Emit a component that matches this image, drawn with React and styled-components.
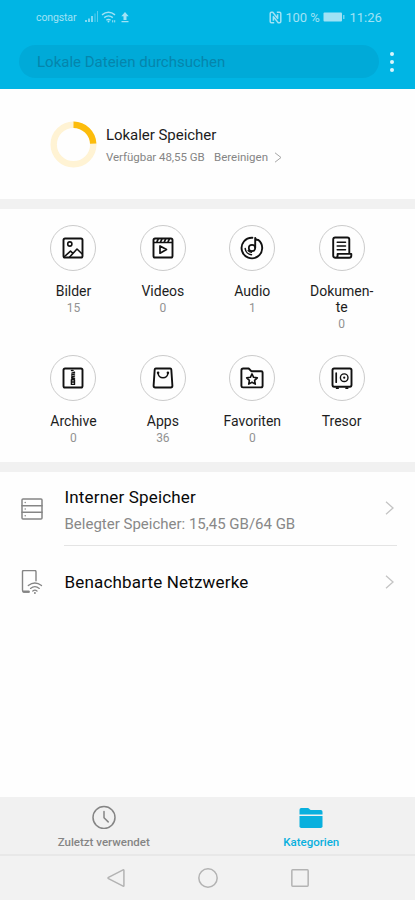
import React from "react";
import styled, { createGlobalStyle } from "styled-components";

const GlobalStyle = createGlobalStyle`
  * { box-sizing: border-box; }
  body { margin: 0; background: #fff; font-family: Roboto, sans-serif; }
  svg { display: block; flex: none; }
`;

const Screen = styled.div`
  width: 415px;
  height: 900px;
  display: flex;
  flex-direction: column;
  background: #fefefe;
  overflow: hidden;
`;

const Header = styled.header`
  flex: none;
  height: 89px;
  background: #00b5e4;
`;

const StatusBar = styled.div`
  height: 45px;
  padding: 1px 33px 12px 36px;
  display: flex;
  align-items: center;
  color: #a0e2f5;
`;

const Carrier = styled.span`
  width: 41px;
  margin-right: 8px;
  font-size: 10.5px;
  letter-spacing: -0.12px;
  white-space: nowrap;
`;

const StatusEnd = styled.div`
  margin-left: auto;
  display: flex;
  align-items: center;
  gap: 3px;
  font-size: 13px;
  white-space: nowrap;
`;

const Percent = styled.span`
  width: 35px;
  letter-spacing: -0.1px;
`;

const Time = styled.span`
  width: 32.6px;
  margin-left: 1px;
`;

const SearchRow = styled.div`
  display: flex;
  align-items: center;
  padding-left: 19px;
`;

const SearchField = styled.div`
  width: 360px;
  height: 33px;
  padding-left: 18px;
  border-radius: 17px;
  background: #00aad8;
  color: #0585ac;
  font-size: 15px;
  line-height: 34px;
`;

const MenuDots = styled.div`
  display: flex;
  flex-direction: column;
  gap: 4px;
  margin-left: 11px;
`;

const Dot = styled.i`
  width: 4px;
  height: 4px;
  border-radius: 50%;
  background: #d9f5fc;
`;

const Summary = styled.section`
  flex: none;
  height: 110px;
  display: flex;
  align-items: center;
  gap: 9px;
  padding-left: 50px;
`;

const SummaryTitle = styled.div`
  margin-top: 4px;
  font-size: 15px;
  line-height: 20px;
  letter-spacing: -0.04px;
  color: #1c1c1c;
`;

const SummaryMeta = styled.div`
  display: flex;
  align-items: center;
  margin-top: 3px;
  font-size: 11.5px;
  line-height: 19px;
  color: #858585;
`;

const FreeSpace = styled.span`
  width: 108px;
  letter-spacing: -0.04px;
`;

const CleanUp = styled.span`
  width: 60px;
`;

const Band = styled.div`
  flex: none;
  height: 10px;
  background: #f1f1f1;
`;

const Categories = styled.section`
  flex: none;
  height: 253px;
  display: grid;
  grid-template-columns: repeat(4, 89.4px);
  grid-template-rows: 130px 1fr;
  padding: 16px 0 0 28.8px;
`;

const Category = styled.div`
  display: flex;
  flex-direction: column;
  align-items: center;
`;

const IconRing = styled.div`
  flex: none;
  width: 46px;
  height: 46px;
  display: grid;
  place-items: center;
  border: 1px solid #cbcbcb;
  border-radius: 50%;
  color: #111;
`;

const CategoryName = styled.div`
  margin-top: 12px;
  font-size: 14px;
  line-height: 16px;
  text-align: center;
  white-space: pre-line;
  color: #1d1d1d;
`;

const Count = styled.div`
  font-size: 12px;
  line-height: 18px;
  color: #929292;
`;

const Entry = styled.div`
  flex: none;
  height: 73.5px;
  display: flex;
  padding-left: 20px;
`;

const EntryIcon = styled.div`
  width: 44px;
  display: flex;
  align-items: center;
  color: #858585;
`;

const EntryBody = styled.div`
  width: 333px;
  display: flex;
  align-items: center;
  justify-content: space-between;
  padding: 0 3px 0 0.5px;
  border-bottom: ${(p) => (p.$divided ? "1px solid #e4e4e4" : "0")};
`;

const EntryTitle = styled.div`
  font-size: 17px;
  line-height: 24px;
  letter-spacing: 0.17px;
  color: #080808;
`;

const EntryText = styled.div`
  padding-top: ${(p) => (p.$divided ? "4px" : "0")};
`;

const EntryNote = styled.div`
  margin-top: 4px;
  font-size: 15px;
  line-height: 22px;
  color: #888;
`;

const TabBar = styled.nav`
  flex: none;
  height: 59px;
  margin-top: auto;
  display: grid;
  grid-template-columns: 1fr 1fr;
  background: #f1f1f1;
  border-bottom: 2px solid #e8e8e8;
`;

const Tab = styled.div`
  display: flex;
  flex-direction: column;
  align-items: center;
  padding-top: 8px;
  gap: 5px;
  font-size: 11.5px;
  font-weight: 500;
  line-height: 16px;
  color: ${(p) => (p.$active ? "#09b0de" : "#858585")};
`;

const SystemNav = styled.div`
  flex: none;
  height: 44px;
  display: flex;
  align-items: center;
  justify-content: center;
  gap: 72px;
  padding-bottom: 1px;
  background: #f2f2f2;
  color: #b3b3b3;
`;

const Glyph = ({ size = 24, width = 1.9, children }) => (
  <svg width={size} height={size} viewBox="0 0 24 24" fill="none" stroke="currentColor"
    strokeWidth={width} strokeLinecap="round" strokeLinejoin="round">
    {children}
  </svg>
);

const Chevron = ({ w = 9, h = 14, color = "#c4c4c4", stroke = 1.3 }) => (
  <svg width={w} height={h} viewBox={`0 0 ${w} ${h}`} fill="none" stroke={color} strokeWidth={stroke}>
    <path d={`M1 .8 L${w - 1} ${h / 2} L1 ${h - 0.8}`} />
  </svg>
);

const icons = {
  image: (
    <>
      <rect x="2.5" y="2.5" width="19" height="19" rx="1.6" />
      <circle cx="8.8" cy="8" r="2.1" strokeWidth="1.6" />
      <path d="M3.5 20.5 9.5 15.2l2.5 2.1M8.7 21 16 13l5.2 5" strokeWidth="1.6" />
    </>
  ),
  video: (
    <>
      <rect x="2.5" y="2.5" width="19" height="19" rx="1.6" />
      <path d="M3 6.5h18" strokeWidth="1.5" />
      <path d="m6 5.6 1.1-2.3m2.6 2.3 1.1-2.3m2.6 2.3 1.1-2.3m2.6 2.3 1.1-2.3" strokeWidth="1.7" />
      <path d="M9 10v7.2l6.5-3.6Z" strokeWidth="1.7" />
    </>
  ),
  audio: (
    <>
      <path d="M12.4 1.7A10.3 10.3 0 1 0 18.4 4Q15.4 3.9 15.2 1.9v9.8" />
      <circle cx="12" cy="12" r="3.2" strokeWidth="1.7" />
      <path d="M5.2 12.6a6.9 6.9 0 0 0 6.3 6.1M8.2 14.6c.7 1.1 1.8 1.5 3.2 1.6" strokeWidth="1.5" />
    </>
  ),
  document: (
    <>
      <path d="M3.2 19.6V3.5q0-2 2-2h12.1q2 0 2 2v14.4M3.2 19.6q0 2.2 2.2 2.2h13.8q2.1 0 2.1-2v-1.9H7.6v1.6q0 2.2-2 2.3" />
      <path d="M7.2 6.2h8.3M7.2 10h8.3M7.2 13.8h8.3" strokeWidth="1.5" />
    </>
  ),
  archive: (
    <>
      <rect x="2.5" y="2.5" width="19" height="19" rx="1.6" />
      <path d="M12 4.5h-1.5m3 1.8-2.6.8m2.6 1-2.8.9m2.8 1.1-2.8.9m2.8 1.3h-2.7" strokeWidth="1.5" />
      <path d="M10.4 13.7h3.1v4.7h-3.1Zm0 2.3h3.1" strokeWidth="1.4" />
    </>
  ),
  apps: (
    <>
      <path d="M4.8 2.5h14.4q1 0 1.1 1l1.1 16.3q0 1.7-1.6 1.7H4.2q-1.6 0-1.6-1.7L3.7 3.5q.1-1 1.1-1Z" />
      <path d="M7.1 6.9a4.9 4.9 0 0 0 9.8 0" strokeWidth="1.6" />
      <path d="M7.1 6.7v.1m9.8-.1v.1" strokeWidth="2.6" />
    </>
  ),
  favorite: (
    <>
      <path d="M1.4 20V4.4Q1.4 2.5 3.2 2.5h5.5l2.6 2.7h9.9q1.4 0 1.4 1.4v13.2q0 1.6-1.6 1.6H3q-1.6 0-1.6-1.4Z" />
      <path d="m12 7.9 1.6 3.4 3.7.5-2.7 2.6.7 3.7-3.3-1.8-3.3 1.8.7-3.7-2.7-2.6 3.7-.5Z" strokeWidth="1.6" />
    </>
  ),
  safe: (
    <>
      <rect x="2.5" y="2.5" width="19" height="18.2" rx="1.6" />
      <path d="M6.2 7.2v9M6.6 22.2h1.5m8 0h1.5" strokeWidth="1.7" />
      <circle cx="14.2" cy="11.7" r="3.8" strokeWidth="1.4" />
      <path d="M14.2 11.7h.01" strokeWidth="2.2" />
    </>
  ),
};

const categories = [
  { icon: "image", name: "Bilder", count: "15" },
  { icon: "video", name: "Videos", count: "0" },
  { icon: "audio", name: "Audio", count: "1" },
  { icon: "document", name: "Dokumen-\nte", count: "0" },
  { icon: "archive", name: "Archive", count: "0" },
  { icon: "apps", name: "Apps", count: "36" },
  { icon: "favorite", name: "Favoriten", count: "0" },
  { icon: "safe", name: "Tresor" },
];

const SignalIcons = () => (
  <svg width="46" height="16" viewBox="0 0 46 16" fill="none" stroke="currentColor">
    <path d="M1 13v-2M4 13V9.5M7 13V7" strokeWidth="1.6" />
    <path d="M10 13V4.5M12.5 13V2" strokeWidth="1" opacity=".55" />
    <path d="M17 5.9q6.5-5.3 13 0M19.2 8.6q4.3-3.5 8.6 0M21.4 11.2q2.1-1.7 4.2 0" strokeWidth="1.4" />
    <circle cx="23.5" cy="12.6" r="1" fill="currentColor" stroke="none" />
    <path d="M27.7 11.2v2.2m2-2.2v2.2" strokeWidth="1" />
    <path d="m40 3 3.7 4.2h-2.2V11h-3V7.2h-2.2ZM36.5 12h7v1.3h-7Z" fill="currentColor" stroke="none" />
  </svg>
);

const NfcIcon = () => (
  <svg width="13" height="13" viewBox="0 0 13 13" fill="none" stroke="currentColor" strokeLinejoin="round">
    <path d="M5.2 11.8H2.4Q1.2 11.8 1.2 10.6V2.4Q1.2 1.2 2.4 1.2H3.8L8.6 7.4V3.2" strokeWidth="1.5" />
    <path d="M7.8 1.2h2.8q1.2 0 1.2 1.2v8.2q0 1.2-1.2 1.2H9.2L4.4 5.6v4.2" strokeWidth="1.5" />
  </svg>
);

const BatteryIcon = () => (
  <svg width="22" height="10" viewBox="0 0 22 10">
    <rect x=".5" y=".5" width="18.5" height="9" rx="1" fill="currentColor" />
    <rect x="20" y="3" width="1.5" height="4" fill="currentColor" opacity=".7" />
  </svg>
);

const StorageRing = () => (
  <svg width="47" height="47" viewBox="0 0 47 47" fill="none" strokeWidth="6.4">
    <circle cx="23.5" cy="23.5" r="19.8" stroke="#fff3d4" />
    <path d="M23.5 3.7A19.8 19.8 0 0 1 43.2 22.7" stroke="#fcbc0c" />
  </svg>
);

export default function App() {
  return (
    <>
      <GlobalStyle />
      <Screen>
        <Header>
          <StatusBar>
            <Carrier>congstar</Carrier>
            <SignalIcons />
            <StatusEnd>
              <NfcIcon />
              <Percent>100 %</Percent>
              <BatteryIcon />
              <Time>11:26</Time>
            </StatusEnd>
          </StatusBar>
          <SearchRow>
            <SearchField>Lokale Dateien durchsuchen</SearchField>
            <MenuDots><Dot /><Dot /><Dot /></MenuDots>
          </SearchRow>
        </Header>
        <Summary>
          <StorageRing />
          <div>
            <SummaryTitle>Lokaler Speicher</SummaryTitle>
            <SummaryMeta>
              <FreeSpace>Verfügbar 48,55 GB</FreeSpace>
              <CleanUp>Bereinigen</CleanUp>
              <Chevron w={8} h={11} color="#a5a5a5" stroke={1} />
            </SummaryMeta>
          </div>
        </Summary>
        <Band />
        <Categories>
          {categories.map((c) => (
            <Category key={c.name}>
              <IconRing><Glyph>{icons[c.icon]}</Glyph></IconRing>
              <CategoryName>{c.name}</CategoryName>
              {c.count && <Count>{c.count}</Count>}
            </Category>
          ))}
        </Categories>
        <Band />
        <Entry>
          <EntryIcon>
            <Glyph width={1.5}>
              <rect x="2" y="2" width="20" height="20" rx="1" />
              <path d="M2 8.7h20M2 15.3h20" />
              <path d="M5.2 5.4h.01M5.2 12h.01M5.2 18.7h.01" />
            </Glyph>
          </EntryIcon>
          <EntryBody $divided>
            <EntryText $divided>
              <EntryTitle>Interner Speicher</EntryTitle>
              <EntryNote>Belegter Speicher: 15,45 GB/64 GB</EntryNote>
            </EntryText>
            <Chevron />
          </EntryBody>
        </Entry>
        <Entry>
          <EntryIcon>
            <Glyph width={1.4}>
              <path d="M9 22H4.2Q2.5 22 2.5 20.3V1.7Q2.5.5 3.7.5h11.1Q16 .5 16 1.7v9" />
              <path d="M3.5 21.7h5.2" strokeWidth="2.2" />
              <path d="M8.3 15.6q6.6-5.2 13.2 0M10.5 18.4q4.4-3.4 8.8 0M12.8 21q2.1-1.7 4.2 0" strokeWidth="1.3" />
              <path d="M14.9 23h.01" strokeWidth="1.9" />
            </Glyph>
          </EntryIcon>
          <EntryBody>
            <EntryText>
              <EntryTitle>Benachbarte Netzwerke</EntryTitle>
            </EntryText>
            <Chevron />
          </EntryBody>
        </Entry>
        <TabBar>
          <Tab>
            <Glyph width={1.5}>
              <circle cx="12" cy="12.5" r="11" />
              <path d="M12 6.5v6.2l4.2 4.2" />
            </Glyph>
            Zuletzt verwendet
          </Tab>
          <Tab $active>
            <svg width="24" height="24" viewBox="0 0 24 24" fill="currentColor">
              <path d="M.5 9.5V4.7Q.5 3 2.2 3h6.5q1 0 1.5.8.8 1.2 2 1.2h9.6q1.7 0 1.7 1.7v2.8Z" />
              <path d="M.5 11h23v10.2q0 1.8-1.8 1.8H2.3Q.5 23 .5 21.2Z" />
            </svg>
            Kategorien
          </Tab>
        </TabBar>
        <SystemNav>
          <Glyph size={20} width={1.8}><path d="M21.5 2.8v18.4q0 1-1 .5L3 12.8q-1.2-.8 0-1.6l17.5-8.9q1-.5 1 .5Z" /></Glyph>
          <Glyph size={20} width={1.8}><circle cx="12" cy="12" r="11" /></Glyph>
          <Glyph size={20} width={1.8}><rect x="2.2" y="2.2" width="19.6" height="19.6" rx="1" /></Glyph>
        </SystemNav>
      </Screen>
    </>
  );
}
